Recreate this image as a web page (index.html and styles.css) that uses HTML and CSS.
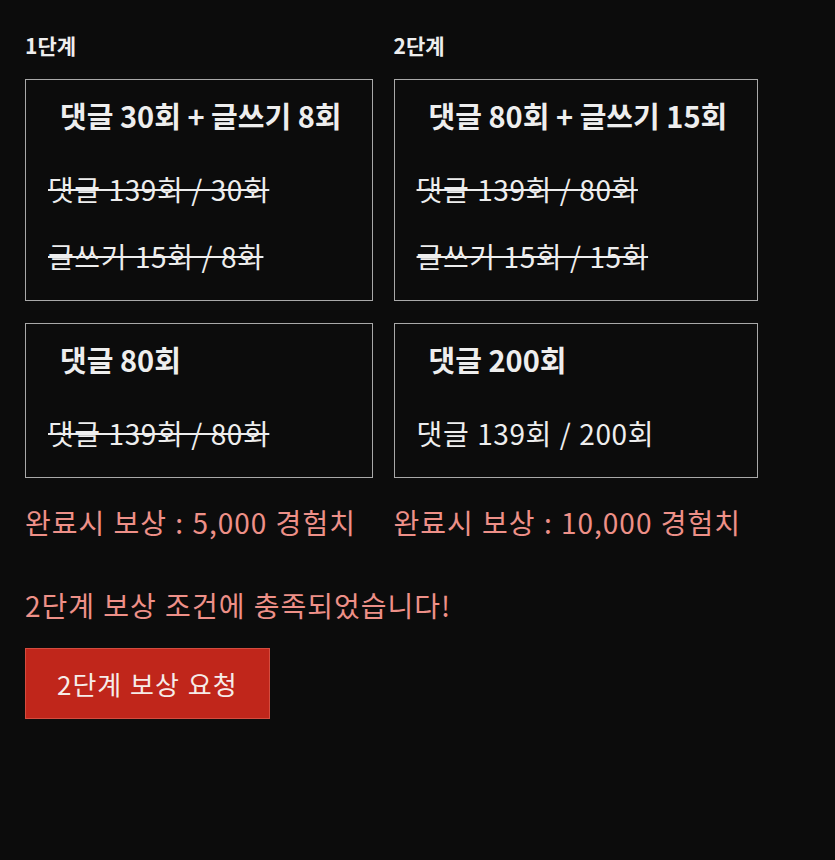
FILE: index.html
```html
<!DOCTYPE html>
<html>
<head>
    <meta charset="utf-8">
    <link rel="stylesheet" href="styles.css">
</head>
<body>
    <div class="stages">
        <div class="stage">
            <h3 class="stage-title">1단계</h3>
            <div class="box">
                <div class="box-title">댓글 30회 + 글쓰기 8회</div>
                <div class="line done">댓글 139회 / 30회</div>
                <div class="line done">글쓰기 15회 / 8회</div>
            </div>
            <div class="box">
                <div class="box-title">댓글 80회</div>
                <div class="line done">댓글 139회 / 80회</div>
            </div>
            <div class="reward">완료시 보상 : 5,000 경험치</div>
        </div>
        <div class="stage">
            <h3 class="stage-title">2단계</h3>
            <div class="box">
                <div class="box-title">댓글 80회 + 글쓰기 15회</div>
                <div class="line done">댓글 139회 / 80회</div>
                <div class="line done">글쓰기 15회 / 15회</div>
            </div>
            <div class="box">
                <div class="box-title">댓글 200회</div>
                <div class="line">댓글 139회 / 200회</div>
            </div>
            <div class="reward">완료시 보상 : 10,000 경험치</div>
        </div>
    </div>
    <p class="notice">2단계 보상 조건에 충족되었습니다!</p>
    <button class="btn">2단계 보상 요청</button>
</body>
</html>
```

FILE: styles.css
```css
body {
    background-color: #0c0c0c;
    margin: 0;
    padding: 30px 25px;
    font-family: "Noto Sans CJK KR", "Noto Sans", sans-serif;
    color: #eeeeee;
}
.stages { display: flex; gap: 21px; align-items: flex-start }
.stage { display: flex; flex-direction: column }
.stage-title {
    font-size: 21px; font-weight: bold;
    margin: 0 0 19px; line-height: 30px;
}
.box {
    border: 1px solid #a9a9a9;
    padding: 15px 22px 10px;
    margin-bottom: 22px;
}
.box-title {
    font-size: 29px; font-weight: bold;
    padding: 0 8px 0 12px; line-height: 40px;
    margin-bottom: 21px;
}
.line {
    font-size: 28px; line-height: 67px;
    letter-spacing: 0.6px; word-spacing: 1px;
}
.line.done { text-decoration: line-through; text-decoration-thickness: 2px }
.reward, .notice {
    color: #ee9088; font-size: 28px; line-height: 40px;
    letter-spacing: 1px; word-spacing: 1px;
}
.reward { margin-top: 2px; white-space: nowrap }
.notice { margin: 43px 0 23px }
.btn {
    background-color: #c0261b; color: #f6ece9;
    border: 1px solid #d44c3f; font-family: inherit;
    font-size: 26px; letter-spacing: 1px; word-spacing: 1px;
    padding: 0 31px; height: 71px;
}
```
